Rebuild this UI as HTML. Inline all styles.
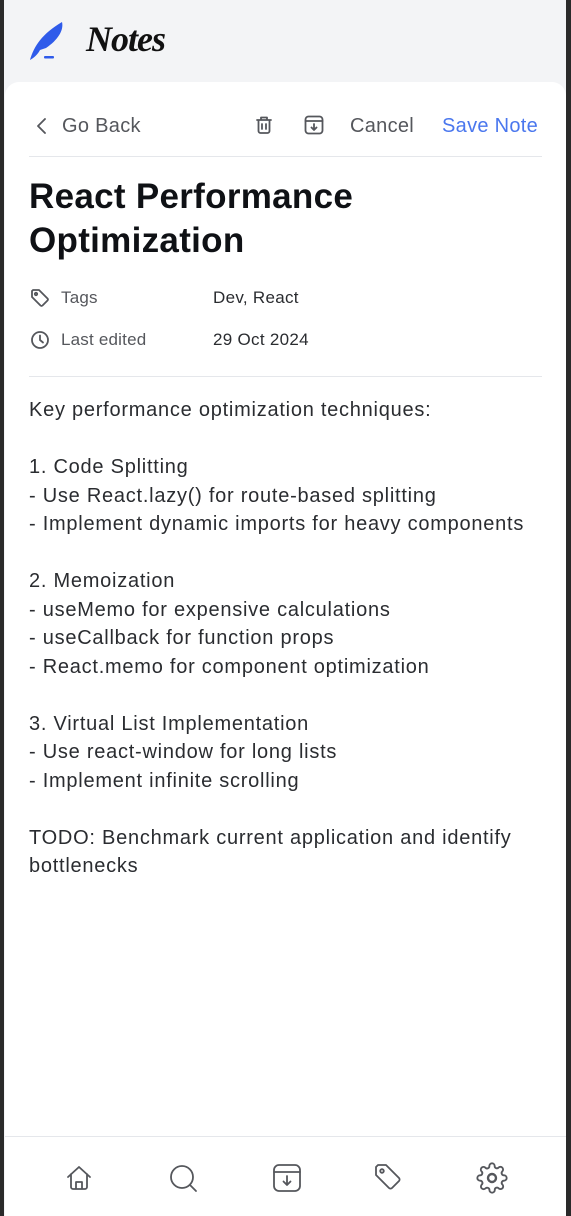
<!DOCTYPE html>
<html><head><meta charset="utf-8"><style>
*{margin:0;padding:0;box-sizing:border-box}
html,body{width:571px;height:1216px;overflow:hidden;background:#2a2a2a;font-family:"Liberation Sans",sans-serif}
.frame{position:absolute;left:4px;top:0;width:562px;height:1216px;background:#f3f4f6}
.logo{position:absolute;left:24px;top:20px}
.logotxt{position:absolute;left:82px;top:18px;font-family:"Liberation Serif",serif;font-style:italic;font-weight:bold;font-size:36px;color:#111;letter-spacing:-1px}
.card{position:absolute;left:1px;top:82px;width:561px;height:1134px;background:#fff;border-radius:14px 14px 0 0}
.top{position:absolute;left:24px;right:24px;top:0;height:75px;border-bottom:1px solid #e5e7eb}
.t{position:absolute;top:33px;font-size:20px;color:#55575c;letter-spacing:0.3px}
svg{position:absolute;fill:none;stroke:#55575c;stroke-width:1.8;stroke-linecap:round;stroke-linejoin:round}
h1{position:absolute;left:24px;top:93px;font-size:35px;line-height:44px;font-weight:bold;color:#0f1115;letter-spacing:0.3px}
.m{position:absolute;font-size:17px;color:#55575c;letter-spacing:0.2px}
.v{position:absolute;left:208px;font-size:17px;color:#2a2c30;letter-spacing:0.3px}
.hr{position:absolute;left:24px;right:24px;top:294px;border-top:1px solid #e5e7eb}
.body{position:absolute;left:24px;top:314px;font-size:20px;line-height:28.5px;color:#2a2c30;white-space:pre;letter-spacing:0.75px}
.nav{position:absolute;left:0;right:0;top:1054px;border-top:1px solid #e5e7eb}
</style></head><body>
<div class="frame">
<svg class="logo" width="40" height="42" viewBox="0 0 40 42" style="stroke:none;fill:#2f5bea"><path d="M2 40 C6 26 14 14 34 2 C36 10 30 20 18 28 L12 30 C10 34 6 38 2 40Z"/><rect x="16" y="36" width="10" height="2.5" rx="1"/></svg>
<div class="logotxt">Notes</div>
<div class="card">
<div class="top">
<svg style="left:6px;top:34px" width="14" height="20" viewBox="0 0 14 20"><path d="M10 3 L3 10 L10 17"/></svg>
<div class="t" style="left:33px;top:33px">Go Back</div>
<svg style="left:224px;top:32px" width="22" height="22" viewBox="0 0 22 22"><path d="M4 6h14M8 6V3.5h6V6M5.5 6v11a2 2 0 0 0 2 2h7a2 2 0 0 0 2-2V6M9 10v5M13 10v5"/></svg>
<svg style="left:274px;top:32px" width="22" height="22" viewBox="0 0 22 22"><rect x="2.5" y="2.5" width="17" height="17" rx="3"/><path d="M2.5 7h17M11 10v6M8.5 13.5L11 16l2.5-2.5"/></svg>
<div class="t" style="left:321px">Cancel</div>
<div class="t" style="left:413px;color:#4a77ee">Save Note</div>
</div>
<h1>React Performance<br>Optimization</h1>
<svg style="left:25px;top:206px" width="20" height="20" viewBox="0 0 20 20"><path d="M2 3v6l8.5 8.5a1.5 1.5 0 0 0 2 0l5-5a1.5 1.5 0 0 0 0-2L9 2H3z"/><circle cx="6" cy="6" r="1.2"/></svg>
<div class="m" style="left:56px;top:206px">Tags</div>
<div class="v" style="top:206px">Dev, React</div>
<svg style="left:25px;top:248px" width="20" height="20" viewBox="0 0 20 20"><circle cx="10" cy="10" r="8"/><path d="M10 5.5V10l3 2.5"/></svg>
<div class="m" style="left:56px;top:248px">Last edited</div>
<div class="v" style="top:248px">29 Oct 2024</div>
<div class="hr"></div>
<div class="body">Key performance optimization techniques:

1. Code Splitting
- Use React.lazy() for route-based splitting
- Implement dynamic imports for heavy components

2. Memoization
- useMemo for expensive calculations
- useCallback for function props
- React.memo for component optimization

3. Virtual List Implementation
- Use react-window for long lists
- Implement infinite scrolling

TODO: Benchmark current application and identify
bottlenecks</div>
<div class="nav">
<svg style="left:59px;top:26px" width="30" height="30" viewBox="0 0 30 30"><path d="M4 14L15 4l11 10M7 11v13a2 2 0 0 0 2 2h12a2 2 0 0 0 2-2V11M12 26v-7h6v7"/></svg>
<svg style="left:163px;top:26px" width="32" height="32" viewBox="0 0 32 32"><circle cx="14" cy="14" r="11"/><path d="M22 22l6 6"/></svg>
<svg style="left:266px;top:25px" width="32" height="32" viewBox="0 0 32 32"><rect x="3" y="3" width="26" height="26" rx="5"/><path d="M3 10h26M16 14v9M12.5 19.5L16 23l3.5-3.5"/></svg>
<svg style="left:368px;top:25px" width="32" height="32" viewBox="0 0 32 32"><path d="M3 5v8l13 13a2.2 2.2 0 0 0 3 0l7-7a2.2 2.2 0 0 0 0-3L13 3H5z"/><circle cx="9" cy="9" r="1.8"/></svg>
<svg style="left:471px;top:25px" width="32" height="32" viewBox="0 0 24 24"><circle cx="12" cy="12" r="3"/><path d="M19.4 15a1.65 1.65 0 0 0 .33 1.82l.06.06a2 2 0 1 1-2.83 2.83l-.06-.06a1.65 1.65 0 0 0-1.82-.33 1.65 1.65 0 0 0-1 1.51V21a2 2 0 1 1-4 0v-.09A1.65 1.65 0 0 0 9 19.4a1.65 1.65 0 0 0-1.82.33l-.06.06a2 2 0 1 1-2.83-2.83l.06-.06A1.65 1.65 0 0 0 4.68 15a1.65 1.65 0 0 0-1.51-1H3a2 2 0 1 1 0-4h.09A1.65 1.65 0 0 0 4.6 9a1.65 1.65 0 0 0-.33-1.82l-.06-.06a2 2 0 1 1 2.83-2.83l.06.06A1.65 1.65 0 0 0 9 4.68a1.65 1.65 0 0 0 1-1.51V3a2 2 0 1 1 4 0v.09a1.65 1.65 0 0 0 1 1.51 1.65 1.65 0 0 0 1.82-.33l.06-.06a2 2 0 1 1 2.830 2.83l-.06.06A1.65 1.65 0 0 0 19.4 9a1.65 1.65 0 0 0 1.51 1H21a2 2 0 1 1 0 4h-.09a1.65 1.65 0 0 0-1.51 1z" stroke-width="1.4"/></svg>
</div>
</div>
</div>
</body></html>
